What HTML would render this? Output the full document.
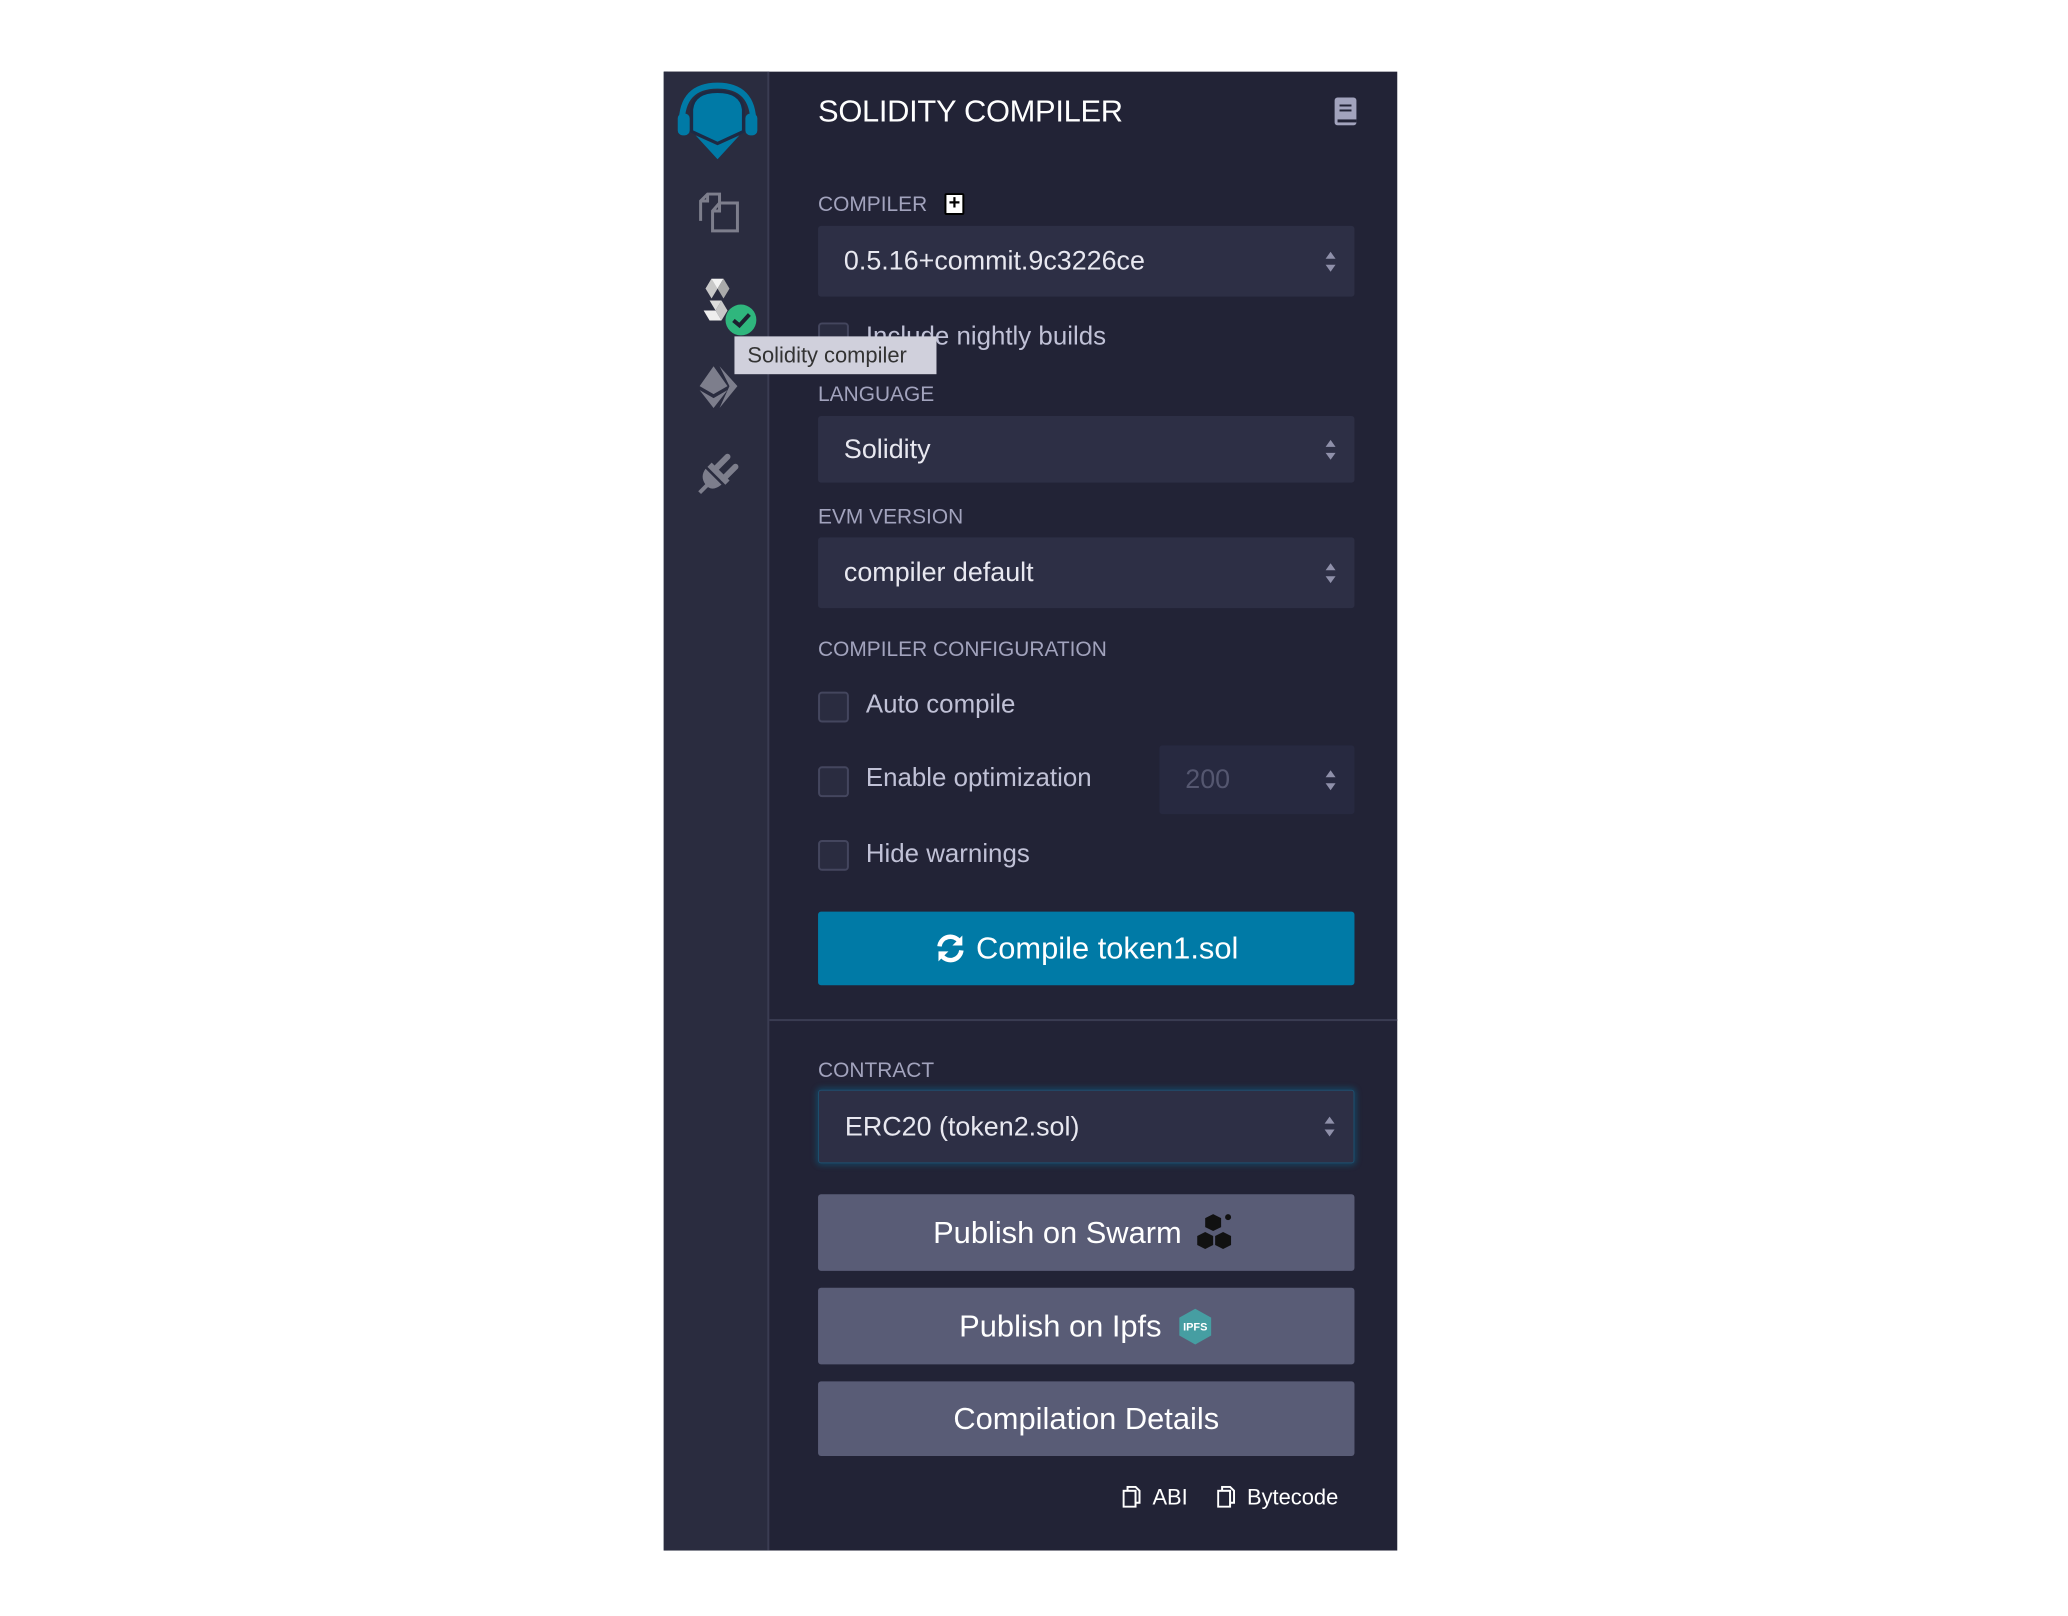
<!DOCTYPE html>
<html><head><meta charset="utf-8"><style>
*{margin:0;padding:0;box-sizing:border-box}
body{width:2068px;height:1616px;background:#fff;position:relative;overflow:hidden;font-family:"Liberation Sans",sans-serif}
#w{position:absolute;left:0;top:0;width:2068px;height:1616px;transform:scale(0.9952);transform-origin:0 0}
.a{position:absolute}
#panel{left:667px;top:72px;width:737px;height:1486px;background:#222336}
#side{left:667px;top:72px;width:106px;height:1486px;background:#2a2c3f;border-right:2px solid #3a3c52}
.lbl{color:#a2a3bd;font-size:21px;left:822px}
.sel{left:822px;width:539px;background:#2d2f45;border-radius:3px;color:#e8e8f0;font-size:27px;padding-left:26px;display:flex;align-items:center}
.arr{position:absolute;right:18px;top:50%;margin-top:-12px;width:12px;height:24px}
.cb{left:822px;width:31px;height:31px;border:2px solid #44465e;border-radius:4px;background:#2a2c40}
.ct{left:870px;color:#c0c1d6;font-size:26px}
.btn{left:822px;width:539px;background:#595c76;border-radius:3px;color:#fff;font-size:31px;display:flex;align-items:center;justify-content:center}
</style></head><body><div id="w">
<div class="a" style="left:667px;top:72px;width:4px;height:1486px;background:#1e4a5a"></div>
<div class="a" id="panel"></div>
<div class="a" id="side"></div>
<!-- logo -->
<svg class="a" style="left:679px;top:80px" width="84" height="80" viewBox="0 0 84 80">
<path d="M6 44 Q6 6 42 6 Q78 6 78 44" fill="none" stroke="#007aa6" stroke-width="6"/>
<rect x="2" y="34" width="12" height="22" rx="5" fill="#007aa6"/><rect x="70" y="34" width="12" height="22" rx="5" fill="#007aa6"/>
<path d="M16 30 Q18 12 42 12 Q66 12 68 30 L68 52 L42 64 L16 52Z" fill="#007aa6" stroke="#1d2a44" stroke-width="3"/>
<path d="M20 56 L42 66 L64 56 L42 80Z" fill="#007aa6"/>
</svg>
<!-- files -->
<svg class="a" style="left:701px;top:192px" width="42" height="42" viewBox="0 0 42 42" fill="none" stroke="#7d7e8c" stroke-width="3">
<path d="M3 30 V10 L10 3 H22 V12"/><path d="M3 10 H10 V3"/><path d="M15 40 V20 L22 12 H40 V40Z"/><path d="M15 20 H22 V12"/>
</svg>
<!-- solidity -->
<svg class="a" style="left:707px;top:280px" width="32" height="42" viewBox="0 0 32 42">
<path d="M8 0 H20 L14 10 H2Z" fill="#f2f2f2"/><path d="M2 10 L8 0 L14 10 L8 20Z" fill="#c8c8c8"/><path d="M14 10 L20 0 L26 10 L20 20Z" fill="#aaa"/>
<path d="M6 22 L12 32 L18 22Z" fill="#ddd"/><path d="M18 22 L24 32 L18 42 L12 32Z" fill="#c8c8c8"/><path d="M6 42 H18 L12 32 H0Z" fill="#eee"/>
</svg>
<div class="a" style="left:729px;top:306px;width:31px;height:31px;border-radius:50%;background:#2fb67d"></div>
<svg class="a" style="left:735px;top:314px" width="20" height="16" viewBox="0 0 20 16"><path d="M2 8 L8 13 L18 2" fill="none" stroke="#1d2030" stroke-width="4"/></svg>
<!-- deploy -->
<svg class="a" style="left:701px;top:368px" width="42" height="42" viewBox="0 0 42 42">
<path d="M16 0 L30 20 L16 28 L2 20Z" fill="#7d7e8c"/><path d="M2 24 L16 32 L30 24 L16 42Z" fill="#7d7e8c"/>
<path d="M22 0 L40 20 L22 42 L32 20Z" fill="#7d7e8c"/>
</svg>
<!-- plugin -->
<svg class="a" style="left:701px;top:455px" width="42" height="42" viewBox="0 0 42 42">
<path d="M8 16 L24 32 Q14 40 8 32 Q2 24 8 16Z" fill="#7d7e8c"/><path d="M2 40 L12 30" stroke="#7d7e8c" stroke-width="4"/>
<path d="M18 16 L30 4" stroke="#7d7e8c" stroke-width="6" stroke-linecap="round"/><path d="M26 26 L38 14" stroke="#7d7e8c" stroke-width="6" stroke-linecap="round"/>
<path d="M12 12 L30 30" stroke="#7d7e8c" stroke-width="6"/>
</svg>
<div class="a" style="left:773px;top:1024px;width:631px;height:2px;background:#3a3c52"></div>

<div class="a" style="left:822px;top:94px;color:#fff;font-size:31px;letter-spacing:-0.3px">SOLIDITY COMPILER</div>
<svg class="a" style="left:1341px;top:98px" width="22" height="28" viewBox="0 0 22 28"><rect x="0" y="0" width="22" height="28" rx="3" fill="#a2a3bd"/><rect x="5" y="7" width="12" height="2" fill="#222336"/><rect x="5" y="12" width="12" height="2" fill="#222336"/><rect x="3" y="22" width="19" height="3" fill="#222336"/></svg>

<div class="a lbl" style="top:194px">COMPILER</div>
<div class="a" style="left:949px;top:194px;width:20px;height:22px;background:#fff;border:2px solid #000;border-radius:2px;color:#000;font-size:20px;font-weight:bold;line-height:17px;text-align:center">+</div>
<div class="a sel" style="top:227px;height:71px">0.5.16+commit.9c3226ce<svg class="arr" viewBox="0 0 12 24"><path d="M6 2 L11 9 H1Z M6 22 L11 15 H1Z" fill="#8f90aa"/></svg></div>

<div class="a cb" style="top:324px"></div>
<div class="a ct" style="top:322px">Include nightly builds</div>
<div class="a" style="left:738px;top:338px;width:203px;height:38px;background:#d0d0dc;color:#333;font-size:22px;padding-left:13px;line-height:38px">Solidity compiler</div>

<div class="a lbl" style="top:385px">LANGUAGE</div>
<div class="a sel" style="top:418px;height:67px">Solidity<svg class="arr" viewBox="0 0 12 24"><path d="M6 2 L11 9 H1Z M6 22 L11 15 H1Z" fill="#8f90aa"/></svg></div>

<div class="a lbl" style="top:508px">EVM VERSION</div>
<div class="a sel" style="top:540px;height:71px">compiler default<svg class="arr" viewBox="0 0 12 24"><path d="M6 2 L11 9 H1Z M6 22 L11 15 H1Z" fill="#8f90aa"/></svg></div>

<div class="a lbl" style="top:641px">COMPILER CONFIGURATION</div>
<div class="a cb" style="top:695px"></div><div class="a ct" style="top:692px">Auto compile</div>
<div class="a cb" style="top:770px"></div><div class="a ct" style="top:766px">Enable optimization</div>
<div class="a sel" style="left:1165px;width:196px;top:749px;height:69px;background:#272940;color:#555770">200<svg class="arr" viewBox="0 0 12 24"><path d="M6 2 L11 9 H1Z M6 22 L11 15 H1Z" fill="#8f90aa"/></svg></div>
<div class="a cb" style="top:844px"></div><div class="a ct" style="top:842px">Hide warnings</div>

<div class="a btn" style="top:916px;height:74px;background:#007aa6">
<svg width="32" height="32" viewBox="0 0 32 32" style="margin-right:10px"><path d="M5 14 A11 11 0 0 1 25 9" fill="none" stroke="#fff" stroke-width="4.5"/><path d="M28 3 V13 H18Z" fill="#fff"/><path d="M27 18 A11 11 0 0 1 7 23" fill="none" stroke="#fff" stroke-width="4.5"/><path d="M4 29 V19 H14Z" fill="#fff"/></svg>Compile token1.sol</div>

<div class="a lbl" style="top:1064px">CONTRACT</div>
<div class="a sel" style="top:1095px;height:74px;border:1px solid #1e4f6f;box-shadow:0 0 6px 2px rgba(0,122,166,0.35)">ERC20 (token2.sol)<svg class="arr" viewBox="0 0 12 24"><path d="M6 2 L11 9 H1Z M6 22 L11 15 H1Z" fill="#8f90aa"/></svg></div>

<div class="a btn" style="top:1200px;height:77px">Publish on Swarm<svg width="44" height="42" viewBox="0 0 44 42" style="margin-left:14px"><path d="M18 2 L26 6 V15 L18 19 L10 15 V6Z" fill="#111"/><path d="M10 20 L18 24 V33 L10 37 L2 33 V24Z" fill="#111"/><path d="M28 20 L36 24 V33 L28 37 L20 33 V24Z" fill="#111"/><circle cx="33" cy="5" r="3" fill="#111"/></svg></div>
<div class="a btn" style="top:1294px;height:77px">Publish on Ipfs<svg width="36" height="40" viewBox="0 0 36 40" style="margin-left:16px"><path d="M18 2 L34 11 V29 L18 38 L2 29 V11Z" fill="#469ea2"/><text x="18" y="24" font-size="11" fill="#fff" text-anchor="middle" font-family="Liberation Sans" font-weight="bold">IPFS</text></svg></div>
<div class="a btn" style="top:1388px;height:75px">Compilation Details</div>

<svg class="a" style="left:1128px;top:1493px" width="18" height="22" viewBox="0 0 18 22" fill="none" stroke="#fff" stroke-width="2"><path d="M5 5 V1 H13 L17 5 V17 H13"/><rect x="1" y="5" width="12" height="16"/></svg>
<div class="a" style="left:1158px;top:1492px;color:#fff;font-size:22px">ABI</div>
<svg class="a" style="left:1223px;top:1493px" width="18" height="22" viewBox="0 0 18 22" fill="none" stroke="#fff" stroke-width="2"><path d="M5 5 V1 H13 L17 5 V17 H13"/><rect x="1" y="5" width="12" height="16"/></svg>
<div class="a" style="left:1253px;top:1492px;color:#fff;font-size:22px">Bytecode</div>
</div></body></html>
